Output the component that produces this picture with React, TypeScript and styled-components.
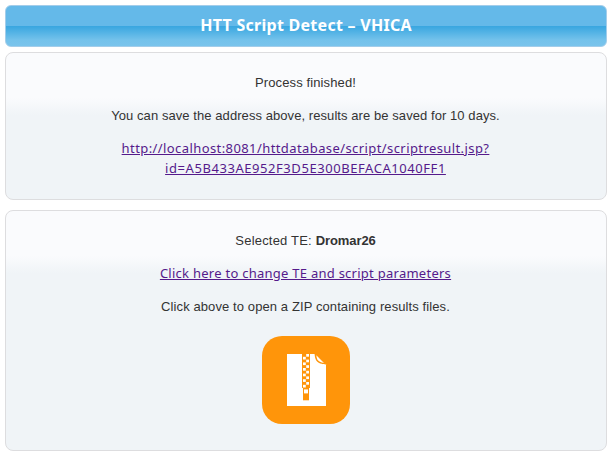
import React from "react";
import styled, { createGlobalStyle } from "styled-components";

const GlobalStyle = createGlobalStyle`
  * { box-sizing: border-box; }
  body { margin: 0; background: #fff; }
`;

const Page = styled.main`
  width: 612px;
  padding: 5px;
  display: flex;
  flex-direction: column;
`;

const TitleBar = styled.header`
  height: 42px;
  border: 1px solid #a3cdea;
  border-radius: 6px;
  background: linear-gradient(#64b9e9 0, #64b9e9 20px, #38a6e0 20px, #74c2eb 34px, #7ac4ec 100%);
  text-align: center;
`;

const Title = styled.h1`
  margin: 0;
  font: bold 16px/38px "Noto Sans", sans-serif;
  letter-spacing: 0.27px;
  color: #fff;
  white-space: nowrap;
`;

const Panel = styled.section<{ $height: number; $gap: number }>`
  height: ${(p) => p.$height}px;
  margin-top: ${(p) => p.$gap}px;
  padding-top: 20px;
  border: 1px solid #dddddf;
  border-radius: 8px;
  background: linear-gradient(#fafbfd 0, #fafbfd 45px, #f0f4f7 62px, #f0f4f7 100%);
  display: flex;
  flex-direction: column;
  align-items: center;
`;

const Text = styled.p<{ $spacing?: number }>`
  margin: 0 0 13px;
  padding-right: 1px;
  font: 13px/20px "Liberation Sans", Arial, sans-serif;
  letter-spacing: ${(p) => p.$spacing ?? 0}px;
  color: #333;
  text-align: center;
  white-space: nowrap;

  b { letter-spacing: -0.1px; }
`;

const LinkText = styled(Text)`
  margin: -1px 0 14px;
  font-family: "Noto Sans", sans-serif;
`;

const Link = styled.a<{ $spacing: number }>`
  letter-spacing: ${(p) => p.$spacing}px;
  color: #551a8b;
  text-decoration: underline;
`;

const ZipLink = styled.a`
  display: block;
  width: 88px;
  height: 88px;
  margin-top: 6px;
`;

const teeth = Array.from({ length: 12 }, (_, i) => i);

const ZipIcon = () => (
  <svg width="88" height="88" viewBox="0 0 88 88" aria-label="ZIP archive">
    <rect width="88" height="88" rx="20" fill="#ff950a" />
    <path d="M25 18H53.5L64 28.5V70H25Z" fill="#fff" />
    <path d="M52.5 17.5H54L64.3 28V28.6C60 28.2 56 27.2 54.4 24.8C53 22.5 52.8 20 52.5 17.5Z" fill="#ff950a" />
    <path d="M54.3 19.2L62 26.9C58.8 26.4 56.4 25.3 55.5 23.7C54.8 22.4 54.4 20.8 54.3 19.2Z" fill="#fff" />
    <rect x="40" y="18" width="8" height="34" fill="#ff950a" />
    {teeth.map((i) => (
      <rect key={i} x={i % 2 ? 41 : 44.2} y={18 + i * 2.8} width="2.8" height="2.7" fill="#fff" />
    ))}
    <rect x="41" y="52" width="6" height="12.3" fill="#ff950a" />
    <rect x="42" y="53.4" width="4" height="4" fill="#fff" />
  </svg>
);

export default function App() {
  return (
    <>
      <GlobalStyle />
      <Page>
        <TitleBar>
          <Title>HTT Script Detect – VHICA</Title>
        </TitleBar>
        <Panel $height={148} $gap={5}>
          <Text $spacing={0.12}>Process finished!</Text>
          <Text $spacing={0.07}>You can save the address above, results are be saved for 10 days.</Text>
          <LinkText>
            <Link href="#" $spacing={0.41}>http://localhost:8081/httdatabase/script/scriptresult.jsp?</Link>
            <br />
            <Link href="#" $spacing={0.56}>id=A5B433AE952F3D5E300BEFACA1040FF1</Link>
          </LinkText>
        </Panel>
        <Panel $height={241} $gap={10}>
          <Text $spacing={0.2}>Selected TE: <b>Dromar26</b></Text>
          <LinkText>
            <Link href="#" $spacing={0.26}>Click here to change TE and script parameters</Link>
          </LinkText>
          <Text $spacing={0.1}>Click above to open a ZIP containing results files.</Text>
          <ZipLink href="#"><ZipIcon /></ZipLink>
        </Panel>
      </Page>
    </>
  );
}
